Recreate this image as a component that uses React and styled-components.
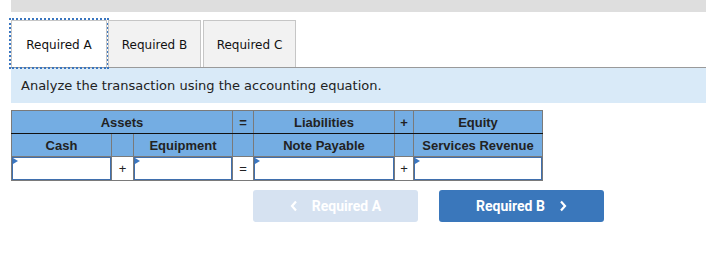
import React from 'react';
import styled, { createGlobalStyle, css } from 'styled-components';

const GlobalStyle = createGlobalStyle`
  body {
    margin: 0;
    background: #fff;
  }
`;

const Page = styled.div`
  padding-left: 11px;
  width: 695px;
  height: 266px;
`;

const TopBar = styled.div`
  height: 12px;
  background-color: #dedede;
`;

const TabList = styled.div`
  display: flex;
  gap: 1px;
  margin-top: 8px;
  height: 47px;
`;

const Tab = styled.div`
  box-sizing: border-box;
  width: ${props => props.width}px;
  margin-right: ${props => props.gap || 0}px;
  display: flex;
  align-items: center;
  justify-content: center;
  padding-top: 2px;
  border: 1px solid #c6c6c6;
  border-bottom: none;
  background-color: #f2f2f2;
  font-family: 'DejaVu Sans', Verdana, sans-serif;
  font-size: 12px;
  color: #111;
  ${props => props.active && css`
    background-color: #fff;
    outline: 2px dotted #3a76c0;
    outline-offset: 0;
  `}
`;

const Instruction = styled.div`
  border-top: 1px solid #9a9a9a;
  background-color: #d9eaf8;
  height: 36px;
  box-sizing: border-box;
  padding: 10px 0 0 10px;
  font-family: 'DejaVu Sans', Verdana, sans-serif;
  font-size: 13px;
  color: #222;
`;

const Table = styled.table`
  margin-top: 7px;
  border-collapse: collapse;
  table-layout: fixed;
  width: 531px;
  font-family: 'Liberation Sans', Arial, sans-serif;
`;

const Head = styled.td`
  background-color: #74ade3;
  border: 1px solid #7a7a7a;
  ${props => props.split && css`
    border-bottom: 1px solid #111;
  `}
  height: 22px;
  padding: 0;
  text-align: center;
  font-size: 13px;
  font-weight: bold;
  color: #222;
`;

const Op = styled.td`
  border: 1px solid #7a7a7a;
  background-color: #fff;
  text-align: center;
  font-size: 13px;
  color: #222;
  padding: 0;
  height: 23px;
`;

const Cell = styled.td`
  border: 1px solid #7a7a7a;
  padding: 0;
  height: 23px;
`;

const InputBox = styled.div`
  position: relative;
  box-sizing: border-box;
  height: 23px;
  border: 1px solid #3f6fae;
  background: #fff;
  &::before {
    content: '';
    position: absolute;
    left: 0;
    top: 0;
    border-top: 3px solid transparent;
    border-bottom: 3px solid transparent;
    border-left: 5px solid #3a76c0;
  }
`;

const Nav = styled.div`
  display: flex;
  gap: 21px;
  margin-top: 9px;
  padding-left: 242px;
`;

const NavButton = styled.button`
  width: 165px;
  height: 32px;
  border: none;
  border-radius: 3px;
  display: flex;
  align-items: center;
  justify-content: center;
  gap: 14px;
  font-family: Roboto, 'Liberation Sans', Arial, sans-serif;
  font-size: 14px;
  font-weight: bold;
  color: #fff;
  background-color: #3a77bb;
  ${props => props.disabled && css`
    background-color: #d6e2f1;
  `}
`;

const Chevron = ({ left }) => (
  <svg width="8" height="12" viewBox="0 0 8 12">
    <path
      d={left ? 'M6 1.5 L2 6 L6 10.5' : 'M2 1.5 L6 6 L2 10.5'}
      fill="none"
      stroke="#fff"
      strokeWidth="2.2"
    />
  </svg>
);

const widths = [100, 22, 99, 21, 141, 19, 129];

function App() {
  return (
    <Page>
      <GlobalStyle />
      <TopBar />
      <TabList>
        <Tab active width={96}>Required A</Tab>
        <Tab width={93} gap={1}>Required B</Tab>
        <Tab width={93}>Required C</Tab>
      </TabList>
      <Instruction>Analyze the transaction using the accounting equation.</Instruction>
      <Table>
        <colgroup>
          {widths.map((w, i) => <col key={i} style={{ width: w }} />)}
        </colgroup>
        <tbody>
          <tr>
            <Head colSpan={3} split>Assets</Head>
            <Head split>=</Head>
            <Head split>Liabilities</Head>
            <Head split>+</Head>
            <Head split>Equity</Head>
          </tr>
          <tr>
            <Head>Cash</Head>
            <Head />
            <Head>Equipment</Head>
            <Head />
            <Head>Note Payable</Head>
            <Head />
            <Head>Services Revenue</Head>
          </tr>
          <tr>
            <Cell><InputBox /></Cell>
            <Op>+</Op>
            <Cell><InputBox /></Cell>
            <Op>=</Op>
            <Cell><InputBox /></Cell>
            <Op>+</Op>
            <Cell><InputBox /></Cell>
          </tr>
        </tbody>
      </Table>
      <Nav>
        <NavButton disabled><Chevron left />Required A</NavButton>
        <NavButton>Required B<Chevron /></NavButton>
      </Nav>
    </Page>
  );
}

export default App;
